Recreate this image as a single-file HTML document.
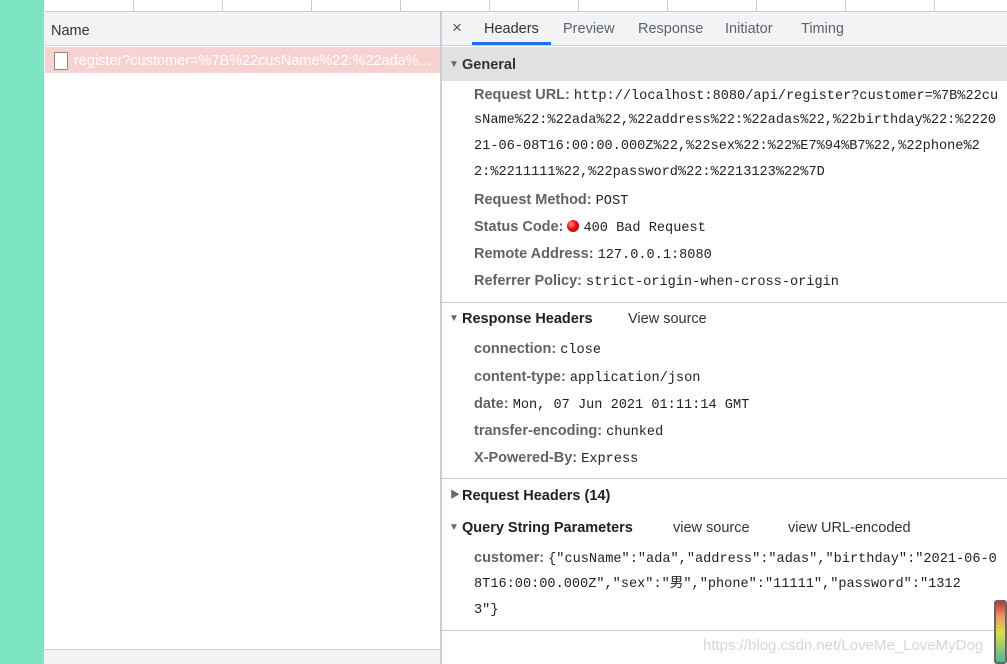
<!DOCTYPE html>
<html><head><meta charset="utf-8"><style>
*{margin:0;padding:0;box-sizing:border-box}
body{width:1007px;height:664px;overflow:hidden;background:#fff;position:relative;font-family:"Liberation Sans","Noto Sans CJK SC",sans-serif;font-size:14.5px;color:#202124}
.a{position:absolute;white-space:nowrap;line-height:18px;height:18px;overflow:visible}
.m{font-family:"Liberation Mono","Noto Sans CJK SC",monospace;font-size:13.6px;color:#222;line-height:18px}
.l{font-weight:bold;color:#5f6368}
.h{font-weight:bold;color:#202124}
.tri{font-size:10px;color:#666}
.hr{position:absolute;left:442px;right:0;height:1px;background:#cacdd1}
</style></head><body>
<div class="a" style="left:0;top:0;width:44px;height:664px;background:#7de5c2"></div>
<div class="a" style="left:45px;top:0;width:962px;height:12px;background:#fff;border-bottom:1px solid #cacdd1"></div>
<div class="a" style="left:133px;top:0;width:1px;height:11px;background:#cacdd1"></div>
<div class="a" style="left:222px;top:0;width:1px;height:11px;background:#cacdd1"></div>
<div class="a" style="left:311px;top:0;width:1px;height:11px;background:#cacdd1"></div>
<div class="a" style="left:400px;top:0;width:1px;height:11px;background:#cacdd1"></div>
<div class="a" style="left:489px;top:0;width:1px;height:11px;background:#cacdd1"></div>
<div class="a" style="left:578px;top:0;width:1px;height:11px;background:#cacdd1"></div>
<div class="a" style="left:667px;top:0;width:1px;height:11px;background:#cacdd1"></div>
<div class="a" style="left:756px;top:0;width:1px;height:11px;background:#cacdd1"></div>
<div class="a" style="left:845px;top:0;width:1px;height:11px;background:#cacdd1"></div>
<div class="a" style="left:934px;top:0;width:1px;height:11px;background:#cacdd1"></div>
<!-- left panel -->
<div class="a" style="left:45px;top:12px;width:395px;height:34px;background:#f1f3f4;border-bottom:1px solid #cacdd1"></div>
<div class="a" style="left:51px;top:22px;font-size:14.5px;color:#333">Name</div>
<div class="a" style="left:45px;top:47px;width:395px;height:26px;background:#f8d2d0"></div>
<div class="a" style="left:54px;top:52px;width:14px;height:18px;background:#fff;border:1px solid #888;border-radius:1px"></div>
<div class="a" style="left:74px;top:52px;font-size:14.5px;color:#fff">register?customer=%7B%22cusName%22:%22ada%...</div>
<div class="a" style="left:45px;top:649px;width:395px;height:15px;background:#f1f3f4;border-top:1px solid #cacdd1"></div>
<div class="a" style="left:440px;top:12px;width:2px;height:652px;background:#cacdd1"></div>
<!-- tabs -->
<div class="a" style="left:442px;top:12px;width:565px;height:34px;background:#f1f3f4;border-bottom:1px solid #cacdd1"></div>
<div class="a" style="left:452px;top:19px;font-size:17px;color:#555">×</div>
<div class="a" style="left:484px;top:20px;color:#333">Headers</div>
<div class="a" style="left:472px;top:42px;width:79px;height:3px;background:#1a73e8"></div>
<div class="a" style="left:563px;top:20px;color:#5f6368">Preview</div>
<div class="a" style="left:638px;top:20px;color:#5f6368">Response</div>
<div class="a" style="left:725px;top:20px;color:#5f6368">Initiator</div>
<div class="a" style="left:801px;top:20px;color:#5f6368">Timing</div>
<!-- General -->
<div class="a" style="left:442px;top:47px;width:565px;height:34px;background:#e1e1e1"></div>
<div class="a tri" style="left:449px;top:56px">▼</div>
<div class="a h" style="left:462px;top:56px;color:#333">General</div>
<div class="a" style="left:474px;top:86px"><span class="l">Request URL:</span> <span class="m">http://localhost:8080/api/register?customer=%7B%22cu</span></div>
<div class="a m" style="left:474px;top:112px">sName%22:%22ada%22,%22address%22:%22adas%22,%22birthday%22:%2220</div>
<div class="a m" style="left:474px;top:138px">21-06-08T16:00:00.000Z%22,%22sex%22:%22%E7%94%B7%22,%22phone%2</div>
<div class="a m" style="left:474px;top:164px">2:%2211111%22,%22password%22:%2213123%22%7D</div>
<div class="a" style="left:474px;top:191px"><span class="l">Request Method:</span> <span class="m">POST</span></div>
<div class="a" style="left:474px;top:218px"><span class="l">Status Code:</span> <span style="display:inline-block;width:12px;height:12px;border-radius:50%;background:radial-gradient(circle at 35% 35%,#ff8a80,#e00 50%,#a00);vertical-align:-1px"></span> <span class="m">400 Bad Request</span></div>
<div class="a" style="left:474px;top:245px"><span class="l">Remote Address:</span> <span class="m">127.0.0.1:8080</span></div>
<div class="a" style="left:474px;top:272px"><span class="l">Referrer Policy:</span> <span class="m">strict-origin-when-cross-origin</span></div>
<div class="hr" style="top:302px"></div>
<div class="a tri" style="left:449px;top:310px">▼</div>
<div class="a h" style="left:462px;top:310px">Response Headers</div>
<div class="a" style="left:628px;top:310px;color:#333">View source</div>
<div class="a" style="left:474px;top:340px"><span class="l">connection:</span> <span class="m">close</span></div>
<div class="a" style="left:474px;top:368px"><span class="l">content-type:</span> <span class="m">application/json</span></div>
<div class="a" style="left:474px;top:395px"><span class="l">date:</span> <span class="m">Mon, 07 Jun 2021 01:11:14 GMT</span></div>
<div class="a" style="left:474px;top:422px"><span class="l">transfer-encoding:</span> <span class="m">chunked</span></div>
<div class="a" style="left:474px;top:449px"><span class="l">X-Powered-By:</span> <span class="m">Express</span></div>
<div class="hr" style="top:478px"></div>
<div class="a tri" style="left:450px;top:487px">▶</div>
<div class="a h" style="left:462px;top:487px">Request Headers (14)</div>
<div class="a tri" style="left:449px;top:519px">▼</div>
<div class="a h" style="left:462px;top:519px">Query String Parameters</div>
<div class="a" style="left:673px;top:519px;color:#333">view source</div>
<div class="a" style="left:788px;top:519px;color:#333">view URL-encoded</div>
<div class="a" style="left:474px;top:549px"><span class="l">customer:</span> <span class="m">{"cusName":"ada","address":"adas","birthday":"2021-06-0</span></div>
<div class="a m" style="left:474px;top:576px">8T16:00:00.000Z","sex":"男","phone":"11111","password":"1312</div>
<div class="a m" style="left:474px;top:602px">3"}</div>
<div class="hr" style="top:630px"></div>
<div class="a" style="left:703px;top:637px;font-size:15px;color:#d6d6d6">https://blog.csdn.net/LoveMe_LoveMyDog</div>
<div class="a" style="left:994px;top:600px;width:13px;height:64px;background:linear-gradient(#c33,#e96,#dd4,#9c6,#4b9);border:2px solid #666;border-radius:3px"></div>
</body></html>
